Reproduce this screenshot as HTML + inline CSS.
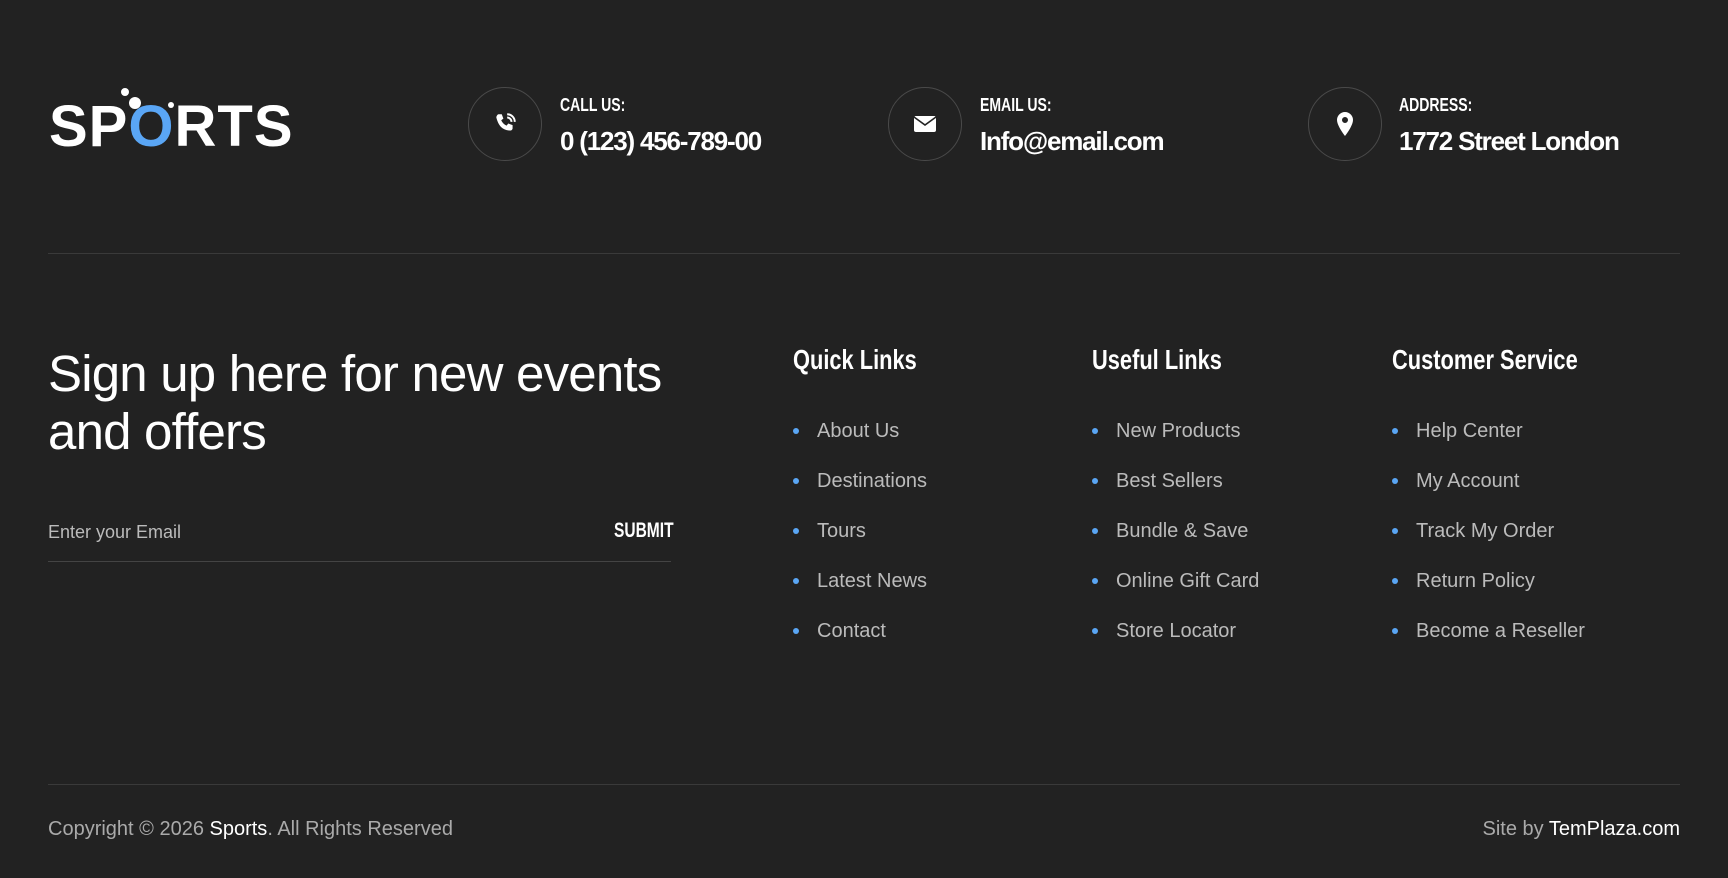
<!DOCTYPE html>
<html><head><meta charset="utf-8"><style>
*{margin:0;padding:0;box-sizing:border-box}
body{width:1728px;height:878px;background:#222;font-family:"Liberation Sans",sans-serif;color:#fff;position:relative;overflow:hidden}
.a{position:absolute;white-space:nowrap}
.logo{left:49px;top:98px;font-size:58px;font-weight:bold;letter-spacing:1px;line-height:1}
.logo span{color:#5aa6f5}
.dot{position:absolute;background:#fff;border-radius:50%}
.circ{position:absolute;width:74px;height:74px;border:1px solid #4a4a4a;border-radius:50%;top:87px;display:flex;align-items:center;justify-content:center}
.lab{font-family:"Liberation Sans Narrow","Liberation Sans",sans-serif;font-weight:bold;font-size:18px;top:95px;transform:scaleX(.78);transform-origin:left}
.val{font-size:26px;top:126px;letter-spacing:-1.2px;font-weight:bold}
.hr{position:absolute;left:48px;width:1632px;height:1px;background:#3a3a3a}
.h1{left:48px;top:345px;font-size:51px;line-height:58px;letter-spacing:-0.8px;white-space:normal;width:700px;font-weight:500}
.ch{font-family:"Liberation Sans Narrow","Liberation Sans",sans-serif;font-weight:bold;font-size:28px;top:344px;transform:scaleX(.78);transform-origin:left}
ul{list-style:none;position:absolute;top:420px}
li{font-size:20px;color:#bbb;height:50px;position:relative;padding-left:24px}
li:before{content:"";position:absolute;left:0;top:8px;width:6px;height:6px;border-radius:50%;background:#5aa6f5}
.foot{top:818px;font-size:20px;color:#aaa}
.foot b{color:#fff;font-weight:normal}
</style></head><body>
<div class="a logo">SP<span>O</span>RTS</div>
<div class="dot" style="left:121px;top:88px;width:8px;height:8px"></div>
<div class="dot" style="left:129px;top:97px;width:12px;height:12px"></div>
<div class="dot" style="left:168px;top:102px;width:6px;height:6px"></div>

<div class="circ" style="left:468px"><svg width="26" height="26" viewBox="0 0 24 24"><path fill="#fff" d="M6 3l3 0 1.5 4-2 1.5c1 2.2 2.8 4 5 5l1.5-2 4 1.5v3c0 1-1 2-2 2C10 18 6 14 4 6c0-1 1-3 2-3z"/><path d="M14 3a7 7 0 0 1 7 7M14 6a4 4 0 0 1 4 4" stroke="#fff" stroke-width="1.8" fill="none"/></svg></div>
<div class="a lab" style="left:560px">CALL US:</div>
<div class="a val" style="left:560px">0 (123) 456-789-00</div>

<div class="circ" style="left:888px"><svg width="24" height="20" viewBox="0 0 24 20"><rect x="1" y="2" width="22" height="16" rx="2" fill="#fff"/><path d="M1 3l11 8 11-8" stroke="#222" stroke-width="1.6" fill="none"/></svg></div>
<div class="a lab" style="left:980px">EMAIL US:</div>
<div class="a val" style="left:980px">Info@email.com</div>

<div class="circ" style="left:1308px"><svg width="18" height="24" viewBox="0 0 18 24"><path fill="#fff" d="M9 0a8 8 0 0 0-8 8c0 6 8 16 8 16s8-10 8-16a8 8 0 0 0-8-8zm0 5a3 3 0 1 1 0 6 3 3 0 0 1 0-6z"/></svg></div>
<div class="a lab" style="left:1399px">ADDRESS:</div>
<div class="a val" style="left:1399px">1772 Street London</div>

<div class="hr" style="top:253px"></div>

<div class="a h1">Sign up here for new events and offers</div>
<div class="a" style="left:48px;top:522px;font-size:18px;color:#bbb">Enter your Email</div>
<div class="a" style="left:614px;top:519px;font-family:'Liberation Sans Narrow','Liberation Sans',sans-serif;font-weight:bold;font-size:21px;transform:scaleX(.74);transform-origin:left">SUBMIT</div>
<div style="position:absolute;left:48px;top:561px;width:623px;height:1px;background:#444"></div>

<div class="a ch" style="left:793px">Quick Links</div>
<div class="a ch" style="left:1092px">Useful Links</div>
<div class="a ch" style="left:1392px">Customer Service</div>
<ul style="left:793px"><li>About Us</li><li>Destinations</li><li>Tours</li><li>Latest News</li><li>Contact</li></ul>
<ul style="left:1092px"><li>New Products</li><li>Best Sellers</li><li>Bundle &amp; Save</li><li>Online Gift Card</li><li>Store Locator</li></ul>
<ul style="left:1392px"><li>Help Center</li><li>My Account</li><li>Track My Order</li><li>Return Policy</li><li>Become a Reseller</li></ul>

<div class="hr" style="top:784px"></div>
<div class="a foot" style="left:48px">Copyright © 2026 <b>Sports</b>. All Rights Reserved</div>
<div class="a foot" style="right:48px">Site by <b>TemPlaza.com</b></div>
</body></html>
